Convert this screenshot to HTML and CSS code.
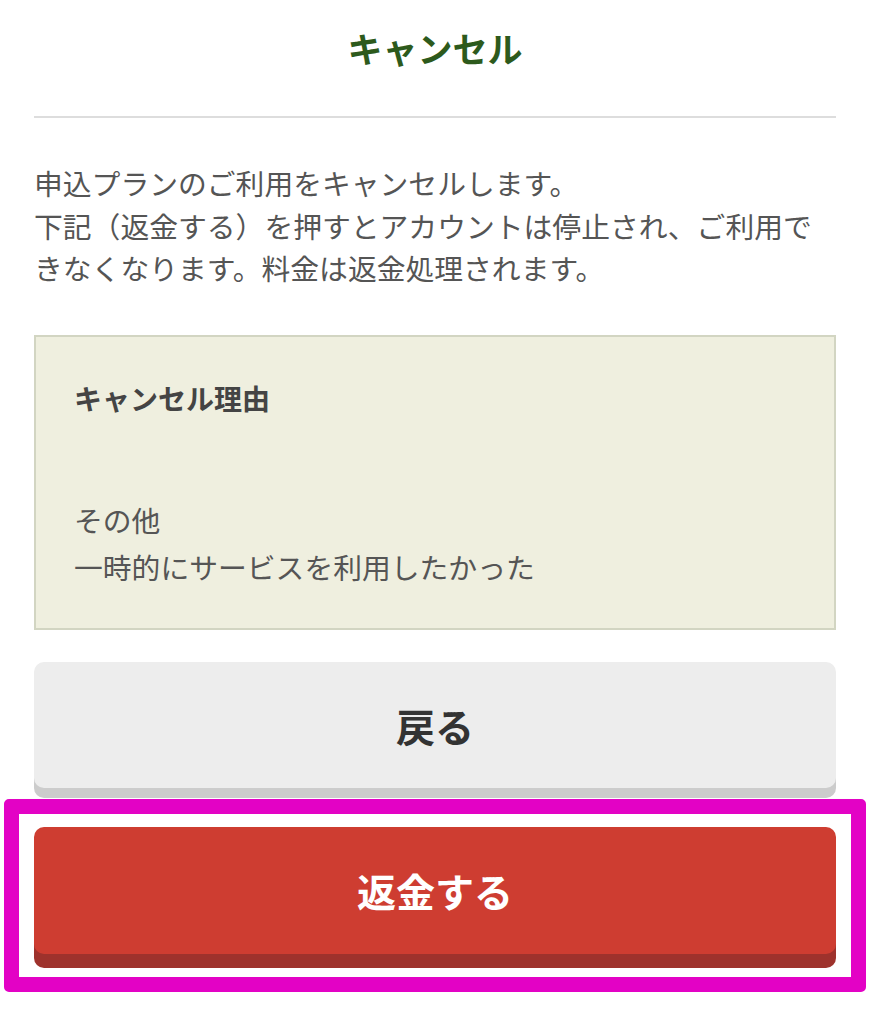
FILE: index.html
```html
<!DOCTYPE html>
<html lang="ja">
<head>
<meta charset="utf-8">
<title>キャンセル</title>
<link rel="stylesheet" href="styles.css">
</head>
<body>
<main class="page">
  <h1 class="title">キャンセル</h1>
  <hr class="divider">
  <p class="lead">申込プランのご利用をキャンセルします。<br>下記（返金する）を押すとアカウントは停止され、ご利用できなくなります。料金は返金処理されます。</p>
  <section class="reason">
    <h2 class="reason-title">キャンセル理由</h2>
    <p class="reason-text">その他<br>一時的にサービスを利用したかった</p>
  </section>
  <div class="actions">
    <button class="btn btn-back" type="button">戻る</button>
    <button class="btn btn-refund" type="button">返金する</button>
  </div>
</main>
<div class="highlight"></div>
</body>
</html>
```
FILE: styles.css
```css
html, body {
  margin: 0;
  padding: 0;
  background: #ffffff;
}

body {
  font-family: "Noto Sans CJK JP", "Noto Sans", sans-serif;
  color: #555555;
  position: relative;
  min-height: 1024px;
}

.page {
  padding: 0 34px 0 34px;
  display: flex;
  flex-direction: column;
}

.title {
  margin: 22px 0 0 0;
  font-size: 35px;
  line-height: 52px;
  font-weight: 700;
  color: #2d5a1c;
  text-align: center;
}

.divider {
  margin: 42px 0 0 0;
  border: 0;
  height: 2px;
  background: #dddddd;
}

.lead {
  margin: 44px 0 0 0;
  font-size: 28.8px;
  line-height: 42.5px;
  letter-spacing: 0;
  color: #555555;
}

.reason {
  margin-top: 45px;
  background: #efefdf;
  border: 2px solid #d2d5c2;
  padding: 40px 38px 38px 38px;
}

.reason-title {
  margin: 0;
  font-size: 28px;
  line-height: 42px;
  font-weight: 700;
  color: #444444;
}

.reason-text {
  margin: 77px 0 0 0;
  font-size: 28.8px;
  line-height: 47px;
  color: #555555;
}

.actions {
  margin-top: 32px;
  display: flex;
  flex-direction: column;
  gap: 29px;
}

.btn {
  display: block;
  width: 100%;
  height: 126px;
  border: 0;
  border-radius: 10px;
  font-family: "Noto Sans CJK JP", "Noto Sans", sans-serif;
  font-size: 39px;
  font-weight: 700;
  cursor: pointer;
  padding: 0;
}

.btn-back {
  background: #ededed;
  color: #333333;
  box-shadow: 0 10px 0 #cccccc;
  margin-bottom: 10px;
}

.btn-refund {
  height: 127px;
  background: #ce3d31;
  color: #ffffff;
  box-shadow: 0 14px 0 #9e322c;
}

.highlight {
  position: absolute;
  left: 4px;
  top: 799px;
  width: 862px;
  height: 193px;
  box-sizing: border-box;
  border: 15px solid #e302c5;
  border-radius: 5px;
  pointer-events: none;
}
```
